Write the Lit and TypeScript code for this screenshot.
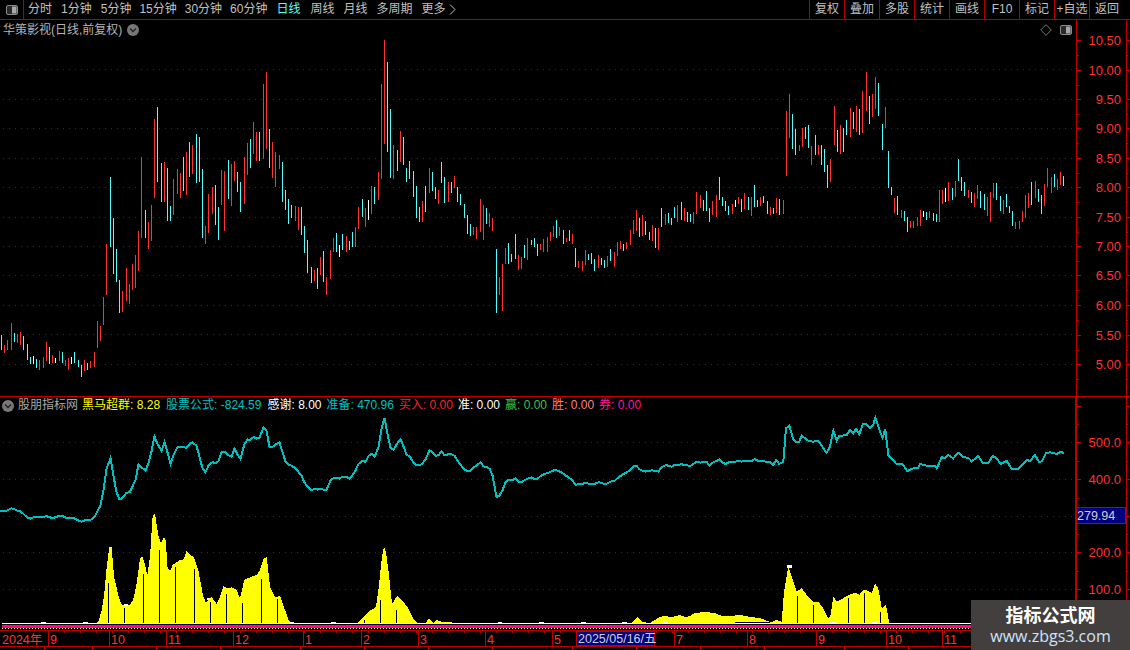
import { LitElement, html, svg, css } from "lit";
import { customElement } from "lit/decorators.js";

type Seg = { ox: number; oy: number; d: string };
const segs: Seg[] = [
  { ox: 0, oy: 300, d: "3,105,150,c 13,135,159,r 22,120,150,r 34,69,150,r 43,99,126,c 52,102,129,r 61,96,135,r 70,108,150,c 82,132,180,c 91,171,192,c 100,168,192,w 109,177,204,c 118,180,210,r 130,171,204,r 139,126,183,r 148,141,192,c 157,165,189,r 166,174,189,w 178,153,183,r 187,156,190,c 196,180,198,r 205,174,210,r 214,171,192,w 223,156,189,c 235,180,201,c 244,195,231,c 253,180,213,r 262,189,210,c 271,183,204,r 283,156,201,r 292,63,144,r 301,78,123,r" },
  { ox: 90, oy: 60, d: "40,710,795,r 49,552,705,r 61,351,560,c 70,474,641,c 79,567,665,c 88,660,758,c 97,693,755,r 109,624,722,r 118,672,731,r 127,612,690,r 136,585,684,r 145,513,632,r 154,291,533,r 166,450,534,c 175,486,567,r 184,435,543,r 193,177,413,r 202,141,366,c 214,309,426,c 223,306,426,r 232,324,483,c 241,438,483,c 250,357,465,r 262,327,402,r 271,339,414,r 280,291,393,c 289,276,405,r 298,246,351,c 307,255,342,r 319,222,369,c 328,231,366,c 337,327,534,c 346,498,552,r 355,402,519,r 367,381,462,r 376,375,495,c 385,441,540,c 394,330,435,r 403,333,513,r 415,300,417,c 424,312,438,r 433,303,363,r 442,336,396,c 451,366,456,c 463,291,432,r 472,249,345,r 481,237,324,c 490,186,282,r 499,216,303,r 508,216,303,c 520,72,297,r 529,36,267,r 538,207,324,c 547,246,354,r 556,276,381,r 568,285,327,r 577,306,426,c 586,390,450,c 595,417,492,c 604,435,474,c 616,438,483,r 625,441,510,r 634,441,525,c 643,498,579,c 652,540,639,c 664,621,669,c 673,630,663,r 682,624,687,c 691,591,645,r 700,573,666,c 709,651,705,r" },
  { ox: 330, oy: 30, d: "0,660,747,r 10,624,666,r 19,609,666,c 28,645,681,w 37,612,660,c 49,618,666,r 58,633,660,c 67,606,651,c 76,591,651,r 85,531,597,r 97,507,561,c 106,534,591,r 115,510,570,w 124,468,552,r 133,471,522,c 145,426,510,r 154,162,447,r 163,30,342,r 172,96,366,c 181,237,444,c 190,345,447,r 202,360,423,c 211,303,396,r 220,321,405,c 229,414,456,c 238,393,447,c 250,423,501,c 259,468,564,c 268,531,576,c 277,513,576,r 286,468,546,c 298,414,489,r 307,426,483,c 316,471,507,c 325,480,522,r 334,396,459,c 343,441,519,c 355,456,516,r 364,456,489,c 373,438,474,r 382,471,516,c 391,492,525,c 403,522,564,c 412,555,612,c 421,582,618,c 430,591,615,r 439,591,627,r 451,507,606,r 460,525,630,r 469,534,582,c 478,549,591,r 487,564,603,r 499,657,849,c 508,741,795,r 517,702,843,r 526,654,702,r 535,639,702,c 544,672,696,c 556,612,687,c 565,675,720,r 574,681,717,r 583,645,684,c 592,624,690,r 604,630,645,c 613,624,651,c 622,642,678,c 631,642,660,r 640,627,666,r 652,621,666,r 661,606,633,r 670,588,621,r 679,570,624,c 688,591,618,r 700,600,642,c 709,624,636,r 718,600,633,c" },
  { ox: 565, oy: 170, d: "22,192,222,r 31,234,291,c 40,273,294,r 52,273,303,r 61,240,285,r 70,252,270,c 79,249,282,c 88,267,303,c 100,255,294,r 109,264,285,c 118,270,294,c 127,258,291,r 136,237,273,c 148,246,291,r 157,216,258,r 166,213,237,r 175,222,243,c 184,216,237,r 196,180,225,r 205,150,192,r 214,120,183,r 223,144,201,c 232,135,198,r 241,153,195,c 253,186,210,c 262,165,213,r 271,174,234,c 280,174,240,r 289,114,171,c 301,132,165,r 310,129,159,c 319,144,165,c 328,111,144,c 337,105,156,r 349,96,150,c 358,114,153,r 367,126,156,c 376,132,156,c 385,126,162,r 394,66,132,r 406,75,114,r 415,90,123,c 424,63,123,c 433,114,156,c 442,93,135,r 454,75,141,r 463,21,90,c 472,81,108,c 481,93,123,c 490,108,135,c 502,102,132,r 511,90,111,w 520,81,102,r 529,87,126,c 538,69,117,r 550,81,120,c 559,81,138,r 568,45,111,c 577,90,111,c 586,81,108,r 595,78,99,c 607,93,132,c 616,111,135,r 625,114,132,c" },
  { ox: 770, oy: 60, d: "19,414,459,r 28,417,465,c 40,420,462,r 49,153,348,r 58,102,234,r 67,162,267,c 76,207,285,c 88,255,273,r 97,204,261,r 106,201,237,c 115,195,264,c 124,258,315,r 136,225,285,c 145,255,285,r 154,255,315,c 163,267,336,c 172,315,384,c 181,297,366,r 193,138,255,r 202,210,276,c 211,195,282,r 220,204,276,c 229,180,225,c 241,144,231,r 250,156,207,c 259,138,216,r 268,147,225,c 277,93,219,r 289,36,153,r 298,108,192,c 307,102,171,r 316,51,147,r 325,69,168,c 337,192,270,c 346,141,205,r 355,273,384,c 364,381,405,c 373,414,459,r 382,408,465,c 394,450,474,r 403,453,483,c 412,471,516,c 421,483,504,r 430,483,504,r 442,471,498,r 451,450,498,r 460,453,471,w 469,456,480,c 478,453,474,r 490,459,483,c 499,462,486,c 508,390,486,r 517,390,432,r 526,384,426,w 535,366,423,r 547,384,420,c 556,363,411,r 565,297,363,c 574,351,393,c 583,366,408,c 595,390,414,r 604,396,429,c 613,399,441,r 622,375,417,r 631,393,444,c 643,402,450,c 652,411,468,r 661,396,486,r 670,369,414,r 679,369,420,c 691,408,453,c 700,420,462,r 709,402,441,c 718,438,459,c 727,453,498,c 736,486,507,r 748,483,507,r 757,453,486,r 766,405,474,r 775,399,444,r 784,366,435,c 796,363,414,r 805,387,426,c 814,405,462,c 823,372,438,r 832,324,381,r 844,351,399,r 853,342,381,c 862,357,390,r 871,336,375,r 880,348,378,c" },
];

const barPaths: Record<string, string> = { r: "", c: "", w: "" };
const bars: { x: number; mid: number }[] = [];
for (const s of segs) {
  for (const item of s.d.split(" ")) {
    const [z, t, b, c] = item.split(",");
    const x = s.ox + Math.floor(+z / 3) + 0.5;
    const top = s.oy + Math.round(+t / 3);
    const bot = s.oy + Math.round(+b / 3);
    barPaths[c] += `M${x} ${top}V${bot}`;
    bars.push({ x, mid: (top + bot) / 2 });
  }
}

const lineHead =
  "0,511 6,510 12,509 20,512 28,518 34,517 40,516 50,518 60,516 70,518 80,521 86,520 92,518 97,512 100,505 105,480 108,462 110,458 113,476 115,488 118,497 125,494 130,490 135,480 139,462 142,472 145,472 150,455 154,438 158,448 162,452 165,440 170,462 175,450 180,447 185,448 190,445 195,443 200,462 205,470 210,462 215,465 220,455 225,450 230,460 235,450 240,458 245,440 250,441 255,438 260,436 265,428 270,448 275,443 280,445 285,460 290,464 295,468 300,475 305,484 310,488 315,487 320,490 325,490 330,480 335,480 340,478 345,476 350,478 355,470 360,463 365,462 370,452 375,454 380,440 384,418 388,440 392,450 396,442 400,440 405,452 410,458 415,465 420,462 425,460 430,452 435,455 440,453 445,455 450,453 455,458 460,465 465,470 470,470 475,465 480,463 485,468 490,472 495,485 497,497 502,488 507,482 515,480 520,481 525,480 530,478 535,480 540,476 545,473 550,472 555,471 560,472 565,474 570,480 575,484 580,482 585,483 590,485 595,483 600,482 605,484 610,482 615,480 620,477 625,472 630,470 635,466 640,470 645,472 650,470 655,470 660,470 665,466 670,466 680,465 690,465 695,462 700,464 705,462 710,464 715,460 720,462 725,464 730,460 735,462 745,461 755,460 765,462";
const lineTail =
  "0,187 10,195 18,180 28,192 40,185 48,85 58,77 70,118 78,127 88,125 95,107 115,122 130,125 145,122 160,145 170,158 180,140 190,92 200,122 208,108 230,105 240,90 250,100 258,87 268,102 278,73 290,73 300,85 310,75 316,53 330,95 338,113 346,87 355,165 380,193 398,193 412,213 430,205 445,203 450,192 470,197 495,198 500,205 515,172 525,175 535,165 550,175 565,158 580,172 595,173 605,184 625,168 638,188 655,188 668,168 680,175 692,192 710,183 725,206 745,206 770,180 780,183 795,165 808,187 816,183 828,160 840,157 860,162 872,155 882,160";
const z3 = (pts: string, ox: number, oy: number) =>
  pts.split(" ").map((p) => {
    const [a, b] = p.split(",");
    return `${(ox + +a / 3).toFixed(1)},${(oy + +b / 3).toFixed(1)}`;
  }).join(" ");

// The hand-read curve carries the trend; the price bars add the bar-to-bar wobble it follows.
const headPts = lineHead.split(" ").map((p) => p.split(",").map(Number));
const interp = (x: number) => {
  for (let i = 1; i < headPts.length; i++) {
    if (x <= headPts[i][0]) {
      const [x0, y0] = headPts[i - 1];
      const [x1, y1] = headPts[i];
      return y0 + ((y1 - y0) * (x - x0)) / (x1 - x0);
    }
  }
  return headPts[headPts.length - 1][1];
};
const wobble = bars
  .map((b, i) => {
    if (b.x >= 768) return "";
    const near = bars.slice(Math.max(0, i - 3), i + 4);
    const avg = near.reduce((s, n) => s + n.mid, 0) / near.length;
    const j = Math.max(-3, Math.min(3, (b.mid - avg) * 0.16));
    return `${b.x},${(interp(b.x) + j).toFixed(1)}`;
  })
  .filter(Boolean)
  .join(" ");
const linePts = "0,511 " + wobble + " " + z3(lineTail, 770, 400);

const areaA = z3(
  "15,372 25,365 35,330 42,290 50,200 58,142 65,142 72,230 85,285 95,315 120,315 130,298 140,250 150,175 158,170 165,195 172,225 180,170 188,45 195,42 205,105 213,130 222,110 228,125 232,200 240,215 248,195 270,180 280,180 290,152 300,165 312,172 325,210 340,290 348,308 365,292 380,312 390,290 400,258 410,265 425,262 440,270 450,295 463,240 480,232 500,225 510,210 520,178 530,170 540,260 555,292 570,288 595,358 605,372",
  90, 500);
const areaB = "356,624 362,619 368,612 376,607 379,585 382,556 384,547 386,552 389,575 392,604 397,596 402,600 408,608 413,618 418,624 425,624 429,618 433,623 437,620 442,622 448,622 455,623 459,624";
const areaC = "630,624 634,620 637,617 642,622 650,623 655,620 660,617 663,616 672,617 680,615 685,617 690,616 695,613 705,612 715,613 722,616 730,616 740,615 750,617 760,618 770,622";
const areaD = z3(
  "0,668 20,660 35,665 42,575 55,500 65,530 80,575 95,565 110,585 130,605 145,605 160,625 175,655 182,645 190,590 200,605 215,598 235,585 258,578 268,585 280,570 295,572 305,580 315,550 325,565 335,625 348,615 358,670",
  770, 400);
const blackLines: [number, number][] = [
  [108, 583], [124, 608], [143, 574], [159, 550], [175, 567], [194, 569], [210, 602], [226, 594], [242, 603], [261, 579], [277, 599],
  [364, 620], [380, 600], [396, 610], [797, 596], [813, 605], [848, 598], [864, 593], [880, 612],
];

const priceY = [40, 70, 99, 128, 158, 187, 217, 246, 275, 305, 335, 364];
const priceL = ["10.50", "10.00", "9.50", "9.00", "8.50", "8.00", "7.50", "7.00", "6.50", "6.00", "5.50", "5.00"];
const gridY = [69, 99, 128, 158, 187, 217, 246, 275, 305, 334, 364];
const idxY = [442, 479, 516, 552, 589];
const timeSeps: [number, string][] = [
  [48, "9"], [109, "10"], [166, "11"], [233, "12"], [303, "1"], [361, "2"], [418, "3"], [485, "4"], [552, "5"],
  [674, "7"], [747, "8"], [816, "9"], [886, "10"], [942, "11"],
];

const legend: [string, string, string][] = [
  ["yellow", "黑马超群", ": 8.28"],
  ["teal wide", "股票公式", ": -824.59"],
  ["white wide", "感谢", ": 8.00"],
  ["teal", "准备", ": 470.96"],
  ["red", "买入", ": 0.00"],
  ["white", "准", ": 0.00"],
  ["green", "赢", ": 0.00"],
  ["pink", "胜", ": 0.00"],
  ["magenta", "券", ": 0.00"],
];

const chevron = html`<svg class="chev" width="12" height="12" viewBox="0 0 12 12">
  <circle cx="6" cy="6" r="6" fill="#777"></circle>
  <path d="M3 4.5 L6 7.5 L9 4.5" fill="none" stroke="#222" stroke-width="1.3"></path>
</svg>`;

@customElement("app-root")
export class AppRoot extends LitElement {
  static styles = css`
    :host {
      display: block;
      position: relative;
      width: 1130px;
      height: 650px;
      background: #000;
      overflow: hidden;
      font: 12px "Liberation Sans", "Noto Sans CJK SC", sans-serif;
      color: #c0c0c0;
    }
    .toolbar {
      display: flex;
      height: 19px;
      border-bottom: 1px solid #b00000;
      line-height: 19px;
      white-space: nowrap;
    }
    .win {
      width: 23px;
      border-right: 1px solid #b00000;
      display: flex;
      align-items: center;
      justify-content: center;
    }
    .periods {
      display: flex;
      gap: 9px;
      padding-left: 4px;
    }
    .tight { margin-right: -1px; }
    .on { color: #55ffff; margin-right: 1px; }
    .more { display: flex; align-items: center; gap: 3px; }
    .tools {
      display: flex;
      margin-left: auto;
      padding-right: 6px;
    }
    .tools span {
      width: 34px;
      border-left: 1px solid #b00000;
      text-align: center;
    }
    .pane { position: relative; }
    .price { height: 376px; border-bottom: 1px solid #c00000; }
    .indi { height: 233px; }
    .pane svg.chart, .axis svg { display: block; }
    .head {
      position: absolute;
      left: 3px;
      top: 2px;
      display: flex;
      align-items: center;
      gap: 5px;
      line-height: 16px;
      color: #b4b4b4;
    }
    .flag {
      position: absolute;
      right: 58px;
      top: 4px;
      display: flex;
      align-items: center;
      gap: 8px;
    }
    .legend {
      position: absolute;
      left: 2px;
      top: 0;
      display: flex;
      align-items: center;
      gap: 5px;
      line-height: 17px;
      white-space: nowrap;
    }
    .legend .name { color: #a8a8a8; margin-right: -1px; margin-left: -1px; }
    .wide { margin-left: 1px; }
    .yellow { color: #ffff00; }
    .teal { color: #00c0c0; }
    .white { color: #fff; }
    .red { color: #ff2020; }
    .green { color: #40c040; }
    .pink { color: #ff8080; }
    .magenta { color: #ff1493; }
    .grid { stroke: #a00000; stroke-width: 1; stroke-dasharray: 1 5; fill: none; shape-rendering: crispEdges; }
    .ax { stroke: #c00000; stroke-width: 1; fill: none; shape-rendering: crispEdges; }
    .ax2 { stroke: #c00000; stroke-width: 2; fill: none; shape-rendering: crispEdges; }
    .tick { stroke: #c00000; fill: none; shape-rendering: crispEdges; }
    .bar { fill: none; stroke-width: 1; shape-rendering: crispEdges; }
    .r { stroke: #ff3232; }
    .c { stroke: #54fcfc; }
    .w { stroke: #ffffff; }
    .lbl { fill: #ff3232; font: 13px "Liberation Sans", sans-serif; }
    .cur { fill: #000080; stroke: #c00000; shape-rendering: crispEdges; }
    .curt { fill: #d0d0d0; font: 12.5px "Liberation Sans", sans-serif; }
    .ln { fill: none; stroke: #00c0c0; stroke-width: 2; shape-rendering: crispEdges; }
    .area { fill: #ffff00; shape-rendering: crispEdges; }
    .cap { fill: #fff; }
    .blk { stroke: #000; stroke-width: 1; shape-rendering: crispEdges; }
    .wl { stroke: #fff; stroke-width: 1; shape-rendering: crispEdges; }
    .pl { stroke: #ff0a80; stroke-width: 3; shape-rendering: crispEdges; }
    .dots { stroke: #fff080; stroke-width: 1; stroke-dasharray: 1 2; shape-rendering: crispEdges; }
    .axis { height: 20px; }
    .tlb { fill: #ff3232; font: 12.5px "Liberation Sans", "Noto Sans CJK SC", sans-serif; }
    .datet { fill: #d0d0d0; font: 12.5px "Liberation Sans", "Noto Sans CJK SC", sans-serif; }
    .mark {
      position: absolute;
      right: 0;
      bottom: 0;
      width: 159px;
      height: 50px;
      padding-bottom: 3px;
      box-sizing: border-box;
      background: #433f3f;
      display: flex;
      flex-direction: column;
      align-items: center;
      justify-content: center;
    }
    .mark b { color: #fff; font-size: 18px; line-height: 24px; font-family: "Noto Sans CJK SC", sans-serif; }
    .mark i { color: #cfe4fa; font: normal 16px "Open Sans", "Liberation Sans", sans-serif; line-height: 20px; }
  `;

  private winIcon() {
    return html`<svg width="12" height="10" viewBox="0 0 12 10">
      <rect x="0.5" y="0.5" width="11" height="9" rx="1.5" fill="#2a2a2a" stroke="#8a8a8a"></rect>
      <rect x="6" y="1.5" width="4.5" height="7" fill="#a8a8a8"></rect>
    </svg>`;
  }

  private pricePane() {
    const ticks: string[] = [];
    priceY.forEach((y) => {
      ticks.push(`M1076 ${y + 0.5}H1081M1126 ${y + 0.5}H1130`);
      ticks.push(`M1076 ${y + 15.5}H1079M1126 ${y + 15.5}H1128`);
    });
    return html`<svg class="chart" width="1130" height="376" viewBox="0 20 1130 376">
      ${gridY.map((y) => svg`<path class="grid" d="M3 ${y}.5H1075"></path>`)}
      <path class="bar r" d=${barPaths.r}></path>
      <path class="bar c" d=${barPaths.c}></path>
      <path class="bar w" d=${barPaths.w}></path>
      <path class="ax" d="M1076.5 20V396M1126.5 20V396"></path>
      <path class="tick" d=${ticks.join("")}></path>
      ${priceY.map((y, i) => svg`<text class="lbl" x="1121" y=${y + 5} text-anchor="end">${priceL[i]}</text>`)}
    </svg>`;
  }

  private indiPane() {
    const ticks: string[] = [];
    for (const y of [406, ...idxY]) ticks.push(`M1076 ${y + 0.5}H1081M1126 ${y + 0.5}H1130`);
    for (const y of [424, 461, 498, 534, 571, 608]) ticks.push(`M1076 ${y + 0.5}H1079M1126 ${y + 0.5}H1128`);
    return html`<svg class="chart" width="1130" height="233" viewBox="0 397 1130 233">
      ${idxY.map((y) => svg`<path class="grid" d="M3 ${y}.5H1075"></path>`)}
      <polygon class="area" points=${"95,624 " + areaA + " 292,624"}></polygon>
      <polygon class="area" points=${areaB}></polygon>
      <polygon class="area" points=${areaC}></polygon>
      <polygon class="area" points=${"770,624 " + areaD + " 889,624"}></polygon>
      ${blackLines.map(([x, y]) => svg`<path class="blk" d="M${x}.5 ${y}V624"></path>`)}
      <rect class="cap" x="787" y="565" width="5" height="3"></rect>
      <rect class="cap" x="124" y="604" width="4" height="2"></rect>
      <rect class="cap" x="165" y="570" width="1" height="4"></rect>
      <rect class="cap" x="169" y="570" width="1" height="4"></rect>
      <rect class="cap" x="207" y="598" width="3" height="2"></rect>
      <path class="wl" d="M2 623.5H971"></path>
      <path class="wl" d="M41 622.5H46M83 622.5H88M290 622.5H294M331 622.5H336M498 622.5H502M539 622.5H544M581 622.5H586M622 622.5H627M663 622.5H668M830 622.5H835M872 622.5H877"></path>
      <path class="pl" d="M2 626.5H971"></path>
      <path class="dots" d="M2 628.5H971"></path>
      <polyline class="ln" points=${linePts}></polyline>
      <path class="ax2" d="M1076 397V630"></path>
      <path class="ax" d="M1126.5 397V630"></path>
      <path class="tick" d=${ticks.join("")}></path>
      <text class="lbl" x="1121" y="447" text-anchor="end">500.0</text>
      <text class="lbl" x="1121" y="484" text-anchor="end">400.0</text>
      <rect class="cur" x="1076.5" y="507.5" width="49" height="16"></rect>
      <text class="curt" x="1077" y="520">279.94</text>
      <text class="lbl" x="1121" y="557" text-anchor="end">200.0</text>
      <text class="lbl" x="1121" y="594" text-anchor="end">100.0</text>
    </svg>`;
  }

  private timeAxis() {
    const minor: string[] = [];
    for (let x = 64; x < 1076; x += 16) minor.push(`M${x}.5 631V633`);
    return html`<svg width="1130" height="20" viewBox="0 630 1130 20">
      <path class="ax" d="M0 630.5H1130M0 646.5H1130"></path>
      <path class="ax" d=${minor.join("")}></path>
      <text class="tlb" x="2" y="644">2024年</text>
      ${timeSeps.map(([x, t]) => svg`
        <path class="ax" d="M${x}.5 631V646"></path>
        <text class="tlb" x=${x + 2} y="644">${t}</text>`)}
      <path class="ax" d="M44.5 647V650M92.5 647V650M156.5 647V650M220.5 647V650M300.5 647V650M364.5 647V650M428.5 647V650M492.5 647V650M572.5 647V650M636.5 647V650M700.5 647V650M764.5 647V650M844.5 647V650M908.5 647V650"></path>
      <rect class="cur" x="576.5" y="631.5" width="78" height="14"></rect>
      <text class="datet" x="578" y="643">2025/05/16/五</text>
    </svg>`;
  }

  render() {
    return html`
      <div class="toolbar">
        <div class="win">${this.winIcon()}</div>
        <div class="periods">
          <span>分时</span><span>1分钟</span><span class="tight">5分钟</span><span class="tight">15分钟</span><span class="tight">30分钟</span><span>60分钟</span>
          <span class="on">日线</span><span>周线</span><span>月线</span><span>多周期</span>
          <span class="more">更多<svg width="7" height="11" viewBox="0 0 7 11"><path d="M1 .5L6 5.5L1 10.5" fill="none" stroke="#c0c0c0"></path></svg></span>
        </div>
        <div class="tools">
          ${["复权", "叠加", "多股", "统计", "画线", "F10", "标记", "+自选", "返回"].map((t) => html`<span>${t}</span>`)}
        </div>
      </div>
      <div class="pane price">
        ${this.pricePane()}
        <div class="head"><span>华策影视(日线,前复权)</span>${chevron}</div>
        <div class="flag">
          <svg width="12" height="12" viewBox="0 0 12 12"><path d="M6 .7L11.3 6L6 11.3L.7 6Z" fill="none" stroke="#777"></path></svg>
          ${this.winIcon()}
        </div>
      </div>
      <div class="pane indi">
        ${this.indiPane()}
        <div class="legend">
          ${chevron}<span class="name">股朋指标网</span>
          ${legend.map(([c, n, v]) => html`<span class=${c}>${n}${v}</span>`)}
        </div>
      </div>
      <div class="axis">${this.timeAxis()}</div>
      <div class="mark"><b>指标公式网</b><i>www.zbgs3.com</i></div>
    `;
  }
}
